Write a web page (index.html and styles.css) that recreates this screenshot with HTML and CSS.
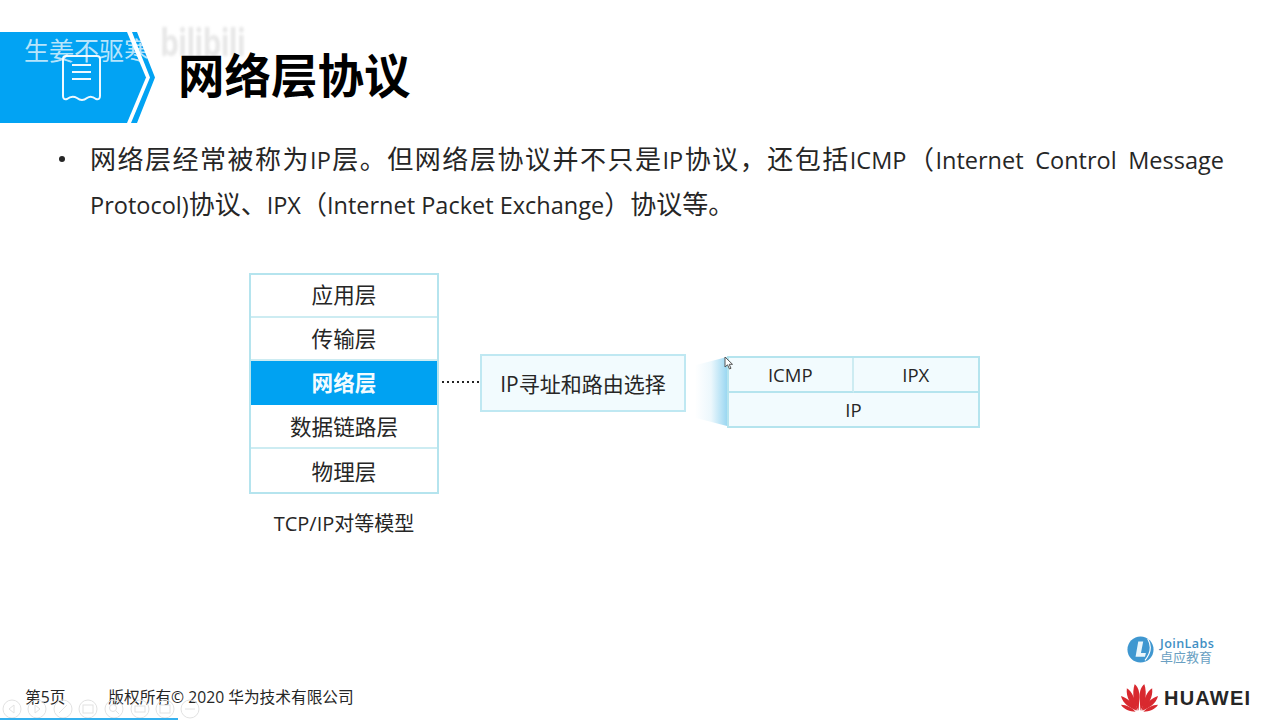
FILE: index.html
```html
<!DOCTYPE html>
<html lang="zh-CN">
<head>
<meta charset="utf-8">
<title>网络层协议</title>
<link rel="stylesheet" href="styles.css">
</head>
<body>
<main class="slide">
  <header class="head">
    <div class="banner">
      <svg class="banner-art" width="156" height="92" viewBox="0 0 156 92">
        <polygon points="0,0 127,0 146,45.500 127,91 0,91" fill="#02a3f3"/>
        <polygon points="132,0 137,0 155,45.500 137,91 131,91 150,45.500" fill="#02a3f3"/>
        <path d="M63 27 Q63 24 66 24 H97 Q100 24 100 27 V64 Q100 68 96 67 Q91 63 87 66 Q82 70 77 66 Q72 63 67 67 Q63 68 63 64 Z" fill="none" stroke="#eef9ff" stroke-width="2"/>
        <path d="M72 33H91M72 40H91M72 47H91" fill="none" stroke="#eef9ff" stroke-width="2"/>
      </svg>
      <span class="mark">生姜不驱寒</span>
      <span class="ghost">bilibili</span>
    </div>
    <h1 class="title">网络层协议</h1>
  </header>

  <ul class="points">
    <li>网络层经常被称为<span class="lat">IP</span>层。但网络层协议并不只是<span class="lat">IP</span>协议，还包括<span class="lat">ICMP</span>（<span class="lat spread">Internet Control Message Protocol)</span>协议、<span class="lat">IPX</span>（<span class="lat">Internet Packet Exchange</span>）协议等。</li>
  </ul>

  <section class="diagram">
    <figure class="model">
      <div class="stack">
        <div class="layer">应用层</div>
        <div class="layer">传输层</div>
        <div class="layer active">网络层</div>
        <div class="layer">数据链路层</div>
        <div class="layer">物理层</div>
      </div>
      <figcaption class="caption">TCP/IP对等模型</figcaption>
    </figure>
    <div class="dots"></div>
    <div class="role">IP寻址和路由选择</div>
    <div class="beam"></div>
    <div class="protos">
      <div class="proto">ICMP</div>
      <div class="proto">IPX</div>
      <div class="proto wide">IP</div>
      <svg class="cursor" width="10" height="14" viewBox="0 0 10 14"><path d="M1 1V11L3.500 8.800 5.500 13 7 12.300 5.200 8.300H8.500Z" fill="#fff" stroke="#555" stroke-width="1"/></svg>
    </div>
  </section>

  <footer class="foot">
    <div class="foot-text">
      <span class="page">第5页</span>
      <span>版权所有© 2020 华为技术有限公司</span>
    </div>
    <div class="logos">
      <div class="joinlabs">
        <svg width="27" height="27" viewBox="0 0 30 30">
          <circle cx="15" cy="15" r="14.500" fill="#3f97d0"/>
          <path d="M12.500 6 H18 L15.500 19 H21 L20 23 H9.500Z" fill="#e9f5fb"/>
          <path d="M23 3 Q30 15 20 27" fill="none" stroke="#fff" stroke-width="1.300"/>
        </svg>
        <div class="jl-text"><b>JoinLabs</b><span>卓应教育</span></div>
      </div>
      <div class="huawei">
        <svg width="39" height="30" viewBox="0 0 40 30">
          <g fill="#d8292f">
            <path d="M19 28 C14 20 12 11 15 1 C18 3 20 8 20 14 Z"/>
            <path d="M21 28 C26 20 28 11 25 1 C22 3 20 8 20 14 Z"/>
            <path d="M18 28 C11 22 6 15 7 5 C12 8 16 16 18 28Z"/>
            <path d="M22 28 C29 22 34 15 33 5 C28 8 24 16 22 28Z"/>
            <path d="M17 28 C10 25 3 21 1 13 C8 15 14 21 17 28Z"/>
            <path d="M23 28 C30 25 37 21 39 13 C32 15 26 21 23 28Z"/>
            <path d="M16 29 C10 29 4 27 1 22 C7 22 12 25 16 29Z"/>
            <path d="M24 29 C30 29 36 27 39 22 C33 22 28 25 24 29Z"/>
          </g>
        </svg>
        <span class="hw-word">HUAWEI</span>
      </div>
    </div>
  </footer>

  <svg class="tools" width="204" height="20" viewBox="0 0 204 20">
    <g fill="none" stroke="#e2e2e2" stroke-width="1">
      <circle cx="10" cy="10" r="9"/><path d="M12 6L7 10L12 14Z"/>
      <circle cx="35" cy="10" r="9"/><path d="M33 6L38 10L33 14Z"/>
      <circle cx="61" cy="10" r="9"/><path d="M57 14L65 6"/>
      <circle cx="86" cy="10" r="9"/><rect x="81" y="6" width="10" height="8"/>
      <circle cx="112" cy="10" r="9"/><circle cx="111" cy="9" r="3.500"/><path d="M114 12L117 15"/>
      <circle cx="138" cy="10" r="9"/><rect x="133" y="7" width="10" height="6"/>
      <circle cx="163" cy="10" r="9"/><rect x="158" y="6" width="10" height="8"/>
      <circle cx="188" cy="10" r="9"/><path d="M183 10H193"/>
    </g>
  </svg>
  <div class="progress"></div>
</main>
</body>
</html>
```
FILE: styles.css
```css
* { box-sizing: border-box; }
html, body { margin: 0; padding: 0; background: #fff; }
body {
  width: 1280px;
  height: 720px;
  overflow: hidden;
  font-family: "Open Sans", "Noto Sans CJK SC", sans-serif;
  color: #262626;
}
.slide {
  position: relative;
  width: 1280px;
  height: 720px;
  padding-top: 32px;
  display: flex;
  flex-direction: column;
}
.head { display: flex; align-items: flex-start; height: 92px; }
.banner { position: relative; width: 178px; height: 92px; flex: none; }
.banner-art { display: block; }
.mark {
  position: absolute;
  left: 24px;
  top: -1px;
  font: 25px/36px "Noto Sans CJK SC", sans-serif;
  color: rgba(255, 255, 255, .72);
  white-space: nowrap;
}
.ghost {
  position: absolute;
  left: 160px;
  top: -8px;
  font: 700 30px/48px "Open Sans", sans-serif;
  letter-spacing: -1px;
  color: #e8e8e8;
  filter: blur(1.2px);
  white-space: nowrap;
  transform: scaleY(1.25);
  transform-origin: left bottom;
}
.title {
  margin: 9px 0 0;
  font: 700 46.500px/64px "Noto Sans CJK SC", sans-serif;
  color: #000;
  position: relative;
}
.points {
  list-style: none;
  margin: 11px 0 0;
  padding: 0 56px 0 90px;
  font: 26px/45px "Noto Sans CJK SC", sans-serif;
  color: #262626;
}
.lat { font-family: "Open Sans", sans-serif; font-size: 23.500px; line-height: 1; }
.spread { word-spacing: 4px; }
.points li { position: relative; text-align: justify; }
.points li::before {
  content: "";
  position: absolute;
  left: -31px;
  top: 21px;
  width: 6px;
  height: 6px;
  border-radius: 50%;
  background: #262626;
}
.diagram {
  display: flex;
  align-items: flex-start;
  margin: 48px 0 0 249px;
}
.model { margin: 0; width: 190px; flex: none; }
.stack { border: 2px solid #b5e4ee; }
.layer {
  height: 44px;
  padding-bottom: 2px;
  border-bottom: 2px solid #cdecf2;
  display: flex;
  align-items: center;
  justify-content: center;
  font: 21.600px/1 "Noto Sans CJK SC", sans-serif;
  color: #262626;
  background: #fff;
}
.layer:nth-child(-n+2) { height: 43px; }
.layer:first-child { padding-bottom: 3px; }
.layer:nth-child(n+4) { padding-bottom: 0; }
.layer:last-child { border-bottom: 0; height: 43px; }
.layer.active {
  background: #00a2f2;
  color: #f2fbff;
  font-weight: 700;
  border-bottom: 0;
}
.caption {
  margin-top: 17px;
  text-align: center;
  font-size: 20px;
  line-height: 26px;
  color: #262626;
}
.dots {
  width: 41px;
  height: 2px;
  margin-top: 108px;
  flex: none;
  background: repeating-linear-gradient(90deg, transparent 0 3px, #222 3px 5px);
}
.role {
  width: 206px;
  height: 58px;
  margin-top: 81px;
  flex: none;
  background: #f2fbfe;
  border: 2px solid #bfe8f2;
  display: flex;
  align-items: center;
  justify-content: center;
  font-size: 21px;
  color: #262626;
  white-space: nowrap;
}
.beam {
  width: 32px;
  height: 69px;
  margin: 84px 0 0 9px;
  flex: none;
  background: linear-gradient(90deg, rgba(130, 205, 238, 0) 0%, rgba(130, 205, 238, .15) 50%, rgba(130, 205, 238, .8) 100%);
  clip-path: polygon(0 12%, 100% 0, 100% 100%, 0 88%);
}
.protos {
  position: relative;
  width: 253px;
  height: 72px;
  margin-top: 83px;
  flex: none;
  display: grid;
  grid-template-columns: 1fr 1fr;
  grid-template-rows: 35px 1fr;
  background: #f2fbfe;
  border: 2px solid #b5e4ee;
}
.proto {
  display: flex;
  align-items: center;
  justify-content: center;
  font-size: 18.500px;
  color: #262626;
}
.proto:first-child { border-right: 2px solid #cdecf2; }
.proto:nth-child(-n+2) { border-bottom: 2px solid #b5e4ee; }
.proto.wide { grid-column: 1 / 3; }
.cursor { position: absolute; left: -5px; top: -2px; }
.foot {
  position: absolute;
  left: 0;
  right: 0;
  bottom: 0;
}
.foot-text {
  position: absolute;
  left: 25px;
  bottom: 12px;
  display: flex;
  gap: 43px;
  font-size: 15.700px;
  line-height: 22px;
  white-space: nowrap;
}
.logos {
  position: absolute;
  left: 1120px;
  bottom: 7px;
  display: flex;
  flex-direction: column;
  gap: 20px;
}
.joinlabs { display: flex; align-items: center; gap: 6px; margin-left: 7px; }
.jl-text { display: flex; flex-direction: column; color: #3f8fc4; line-height: 13px; }
.jl-text b { font-size: 12.600px; font-weight: 600; letter-spacing: .4px; }
.jl-text span { font-size: 13px; color: #6a9fc2; font-family: "Noto Sans CJK SC", sans-serif; }
.huawei { display: flex; align-items: center; gap: 5px; }
.hw-word { font: 700 20px/30px "Liberation Sans", sans-serif; letter-spacing: 1.200px; color: #262626; }
.tools {
  position: absolute;
  left: 2px;
  bottom: 1px;
}
.progress {
  position: absolute;
  left: 0;
  bottom: 0;
  width: 178px;
  height: 2px;
  background: #35b0ee;
}
```
